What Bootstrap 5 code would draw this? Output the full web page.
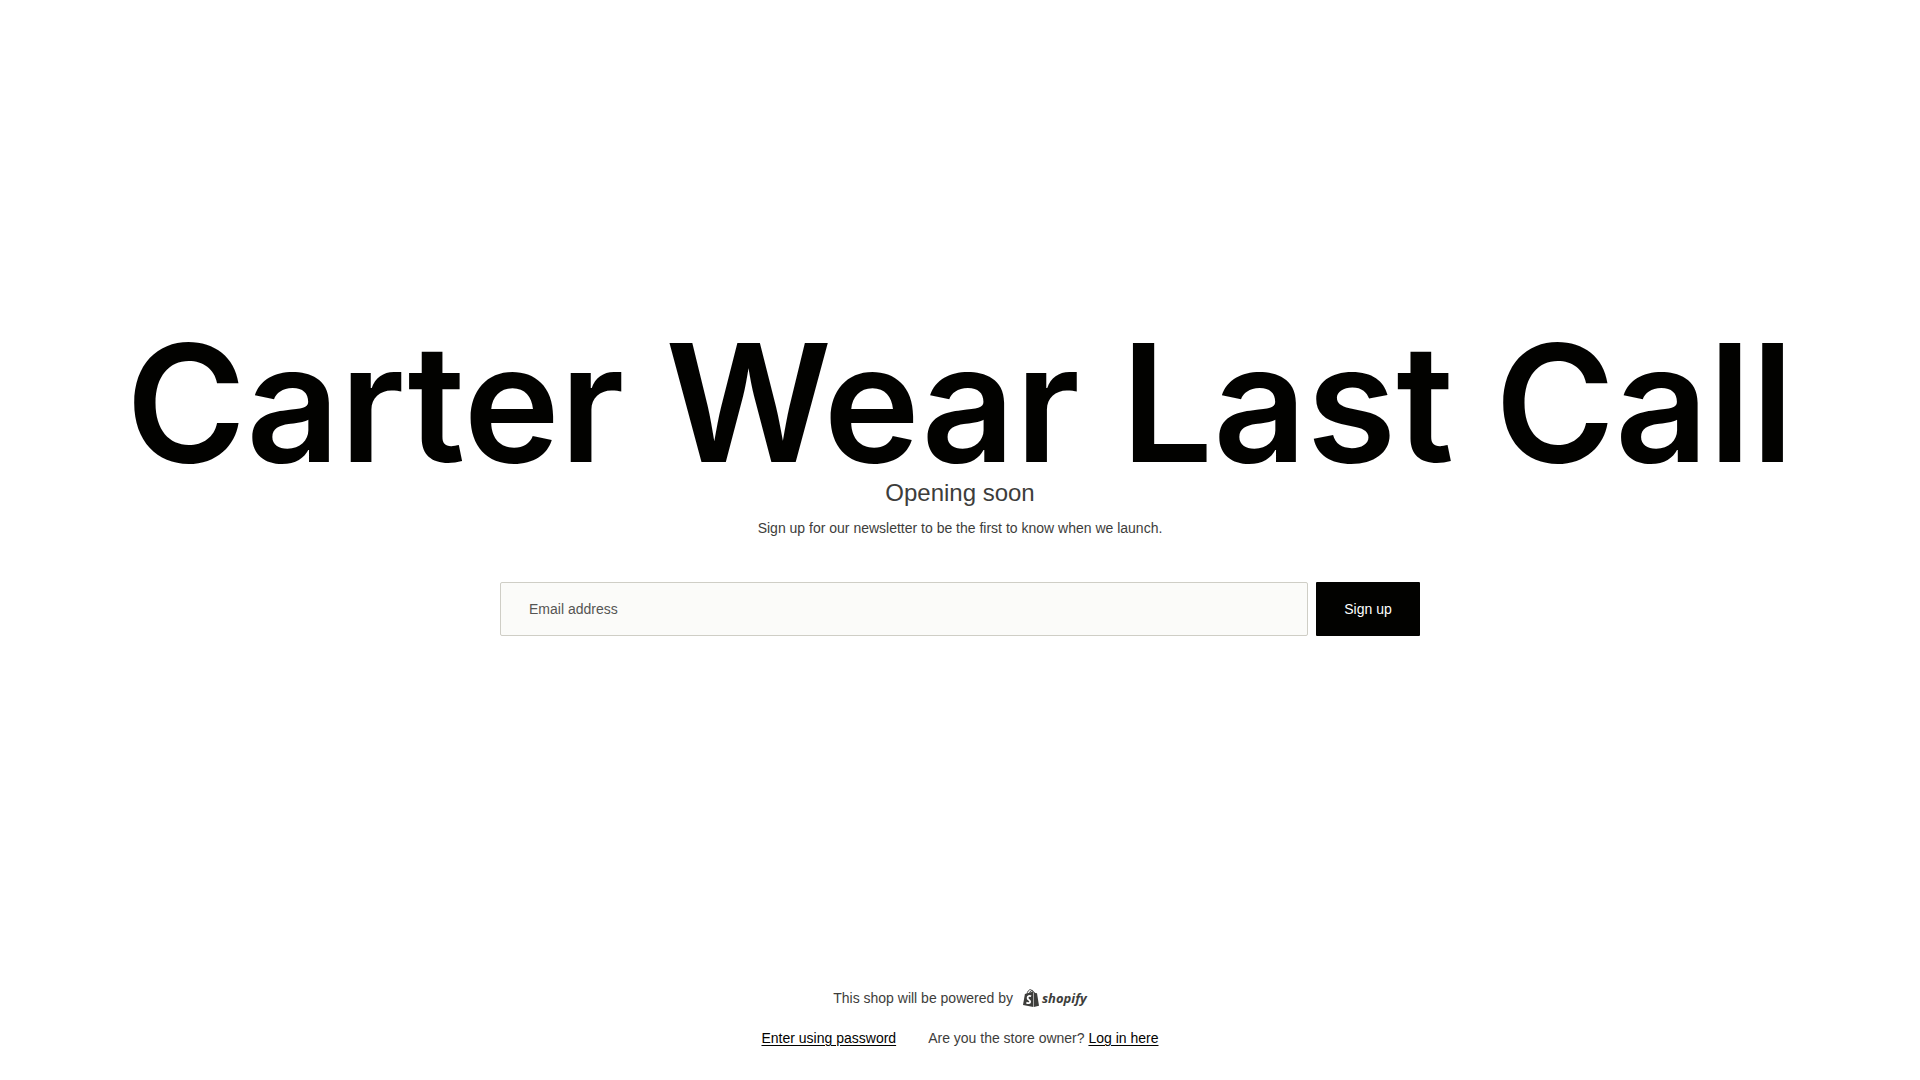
<!DOCTYPE html>
<html lang="en">
<head>
<meta charset="utf-8">
<meta name="viewport" content="width=device-width, initial-scale=1">
<title>Carter Wear Last Call</title>
<link href="https://cdn.jsdelivr.net/npm/bootstrap@5.3.0/dist/css/bootstrap.min.css" rel="stylesheet">
<style>
  body { font-family: "Liberation Sans", Arial, sans-serif; font-size: 14px; line-height: 20px; color: #3d3d3b; background: #fff; }
  main { padding-bottom: 22px; }
  .store-name { font-family: Inter, sans-serif; font-size: clamp(48px, 9vw, 163px); line-height: .9; font-weight: 600; color: #020200; }
  .opening { font-size: 24px; line-height: 34px; }
  .signup { max-width: 920px; margin-top: 44px; }
  .signup .form-control { height: 54px; padding: 0 28px; font-size: 14px; background: #fbfbf9; border: 1px solid #cfcec6; border-radius: 2px; color: #3d3d3b; }
  .signup .form-control::placeholder { color: #555553; opacity: 1; }
  .signup .btn { height: 54px; min-width: 104px; font-size: 14px; border: 0; border-radius: 1px; background: #020200; color: #fff; }
  .page-foot { gap: 20px; padding-bottom: 32px; }
  .page-foot a { color: #020200; text-underline-offset: 2px; }
  .powered { gap: 10px; }
  .page-foot .brand { color: #3d3d3b; gap: 3px; }
  .wordmark { font-family: "Open Sans", sans-serif; font-size: 13px; font-style: italic; font-weight: 700; }
</style>
<script src="https://cdn.jsdelivr.net/npm/bootstrap@5.3.0/dist/js/bootstrap.bundle.min.js" defer></script>
</head>
<body class="min-vh-100 d-flex flex-column">
<main class="flex-grow-1 d-flex flex-column align-items-center justify-content-center text-center px-3">
  <h1 class="store-name mb-0">Carter Wear Last Call</h1>
  <h2 class="opening fw-normal mb-0">Opening soon</h2>
  <p class="mt-2 mb-0">Sign up for our newsletter to be the first to know when we launch.</p>
  <form class="signup d-flex gap-2 w-100">
    <label class="visually-hidden" for="email">Email address</label>
    <input class="form-control flex-grow-1" type="email" id="email" placeholder="Email address">
    <button class="btn flex-shrink-0" type="submit">Sign up</button>
  </form>
</main>
<footer class="page-foot d-flex flex-column align-items-center px-3">
  <div class="powered d-flex align-items-center">
    <span>This shop will be powered by</span>
    <a class="brand d-flex align-items-center text-decoration-none" href="#">
      <svg width="16" height="18" viewBox="0 0 16 18" aria-hidden="true">
        <path d="M1.900 5 10.400 2.600 10.400 18 0 16Z" fill="#3d3d3b"/>
        <path d="M10.900 2.800 12.200 4.100 14 4.200 16 16.700 10.900 18Z" fill="#3d3d3b"/>
        <path d="M4 5.200C4.300 2.700 5.800.6 7.400.6c1.500 0 2 1.700 2 3.500M6.600 4.400C7 2.300 8.200 1.200 9.200 1.400c1 .2 1.400 1.200 1.500 2.200" fill="none" stroke="#3d3d3b" stroke-width=".9"/>
        <path d="M8.100 7.300C6.500 6.500 4.600 7 4.600 8.900c0 1.900 2.600 2 2.600 3.800 0 1.600-2 1.900-3.800.7" fill="none" stroke="#fff" stroke-width="1.800"/>
      </svg>
      <span class="wordmark">shopify</span>
    </a>
  </div>
  <div class="d-flex flex-wrap justify-content-center">
    <a class="me-4 pe-2" href="#">Enter using password</a>
    <span>Are you the store owner? <a href="#">Log in here</a></span>
  </div>
</footer>
</body>
</html>
